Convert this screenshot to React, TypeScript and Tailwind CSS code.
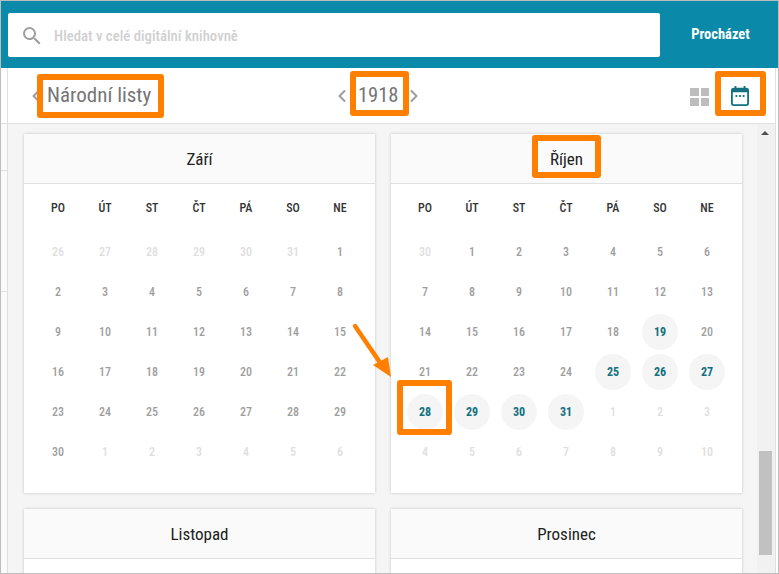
import { ChevronLeft, ChevronRight } from 'lucide-react';

const DAYS = ['PO', 'ÚT', 'ST', 'ČT', 'PÁ', 'SO', 'NE'];

type Day = { n: number; muted?: boolean; issue?: boolean };

const range = (from: number, to: number, extra: Partial<Day> = {}): Day[] =>
  Array.from({ length: to - from + 1 }, (_, i) => ({ n: from + i, ...extra }));

const SEPTEMBER: Day[] = [
  ...range(26, 31, { muted: true }),
  ...range(1, 30),
  ...range(1, 6, { muted: true }),
];

const OCTOBER: Day[] = [
  ...range(30, 30, { muted: true }),
  ...range(1, 18),
  ...range(19, 19, { issue: true }),
  ...range(20, 24),
  ...range(25, 31, { issue: true }),
  ...range(1, 10, { muted: true }),
];

function MonthHeader({ name }: { name: string }) {
  return (
    <div className="h-[50px] pt-[2px] flex items-center justify-center bg-[#fafafa] border-b border-[#e0e0e0] text-[17px] text-[#212121] font-stretch-condensed">
      {name}
    </div>
  );
}

function MonthCard({ name, days }: { name: string; days: Day[] }) {
  return (
    <div className="bg-white shadow-[0_0_3px_rgba(0,0,0,0.2)] h-[359px]">
      <MonthHeader name={name} />
      <div className="pl-[10.5px] pr-[11.5px] pt-[4px]">
        <div className="grid grid-cols-7 mb-[4px]">
          {DAYS.map((d) => (
            <div key={d} className="h-[40px] flex items-center justify-center text-[12px] font-medium text-[#333] font-stretch-condensed">
              {d}
            </div>
          ))}
        </div>
        <div className="grid grid-cols-7">
          {days.map((d, i) => (
            <div key={i} className="h-[40px] flex items-center justify-center">
              <span
                className={`w-9 h-9 rounded-full flex items-center justify-center text-[12px] font-stretch-condensed ${
                  d.issue ? 'bg-[#f5f5f5] text-[#12707f] font-bold' : d.muted ? 'font-medium text-[#dedede]' : 'font-medium text-[#9e9e9e]'
                }`}
              >
                {d.n}
              </span>
            </div>
          ))}
        </div>
      </div>
    </div>
  );
}

export default function App() {
  return (
    <div className="relative w-[779px] h-[574px] overflow-hidden bg-white border border-[#bdbdbd] font-['Roboto',sans-serif]">
      {/* Search bar */}
      <div className="h-[67px] bg-[#0a89a8] flex items-center pl-[7px] pt-[1px]">
        <div className="w-[652px] h-[44px] bg-white rounded-[2px] flex items-center pl-[12px]">
          <svg width="24" height="24" viewBox="0 0 24 24" className="mt-[2px] text-[#9e9e9e]">
            <path fill="currentColor" d="M15.5 14h-.79l-.28-.27A6.471 6.471 0 0 0 16 9.5 6.5 6.5 0 1 0 9.5 16c1.61 0 3.09-.59 4.23-1.57l.27.28v.79l5 4.99L20.49 19l-4.99-5zm-6 0C7.01 14 5 11.99 5 9.5S7.01 5 9.5 5 14 7.01 14 9.5 11.99 14 9.5 14z" />
          </svg>
          <span className="ml-[10px] mt-[2px] text-[14.8px] font-medium text-[#d0d0d0] font-stretch-condensed">Hledat v celé digitální knihovně</span>
        </div>
        <div className="flex-1 pl-[3px] text-center text-[14.5px] font-bold text-white font-stretch-condensed">Procházet</div>
      </div>

      <div className="flex h-[505px]">
        {/* Left strip */}
        <div className="w-[7px] shrink-0 border-r border-[#e0e0e0] flex flex-col">
          <div className="h-[56px] border-b border-[#e0e0e0]" />
          <div className="h-[47px] border-b border-[#e0e0e0] bg-[#fafafa]" />
          <div className="h-[121px] border-b border-[#e0e0e0] bg-[#fafafa]" />
          <div className="flex-1 bg-[#fafafa]" />
        </div>

        <div className="flex-1 min-w-0 flex flex-col">
          {/* Toolbar */}
          <div className="h-[56px] shrink-0 border-b border-[#e0e0e0] flex items-center pl-[18px] pr-[26px] text-[#757575]">
            <ChevronLeft size={20} strokeWidth={2.5} className="text-[#9e9e9e] shrink-0" />
            <span className="ml-[1px] w-[285px] shrink-0 text-[21px] font-stretch-condensed">Národní listy</span>
            <ChevronLeft size={20} strokeWidth={2.5} className="text-[#9e9e9e] shrink-0" />
            <span className="mx-[6px] text-[20.5px] font-stretch-condensed">1918</span>
            <ChevronRight size={20} strokeWidth={2.5} className="text-[#9e9e9e] shrink-0" />
            <div className="ml-auto mt-[2px] grid grid-cols-2 gap-[2px] w-[19px] h-[18px] mr-[22px]">
              <span className="bg-[#bdbdbd]" />
              <span className="bg-[#bdbdbd]" />
              <span className="bg-[#bdbdbd]" />
              <span className="bg-[#bdbdbd]" />
            </div>
            <svg width="18" height="20" viewBox="0 0 20 22" preserveAspectRatio="none" className="text-[#12707f]">
              <path fill="currentColor" d="M4 0h2v2h8V0h2v2h1a3 3 0 0 1 3 3v14a3 3 0 0 1-3 3H3a3 3 0 0 1-3-3V5a3 3 0 0 1 3-3h1zM2 7v12a1 1 0 0 0 1 1h14a1 1 0 0 0 1-1V7z" />
              <path fill="currentColor" d="M5 10h2v2H5zM9 10h2v2H9zM13 10h2v2h-2z" />
            </svg>
          </div>

          {/* Scrolling calendar */}
          <div className="flex-1 min-h-0 flex bg-[#f5f5f5]">
            <div className="flex-1 min-w-0 overflow-hidden pl-[16px] pr-[15px] pt-[10px]">
              <div className="grid grid-cols-2 gap-[16px]">
                <MonthCard name="Září" days={SEPTEMBER} />
                <MonthCard name="Říjen" days={OCTOBER} />
                <div className="bg-white h-[120px] shadow-[0_0_3px_rgba(0,0,0,0.2)]">
                  <MonthHeader name="Listopad" />
                </div>
                <div className="bg-white h-[120px] shadow-[0_0_3px_rgba(0,0,0,0.2)]">
                  <MonthHeader name="Prosinec" />
                </div>
              </div>
            </div>
            <div className="w-[18px] shrink-0 bg-[#f1f1f1] relative">
              <div className="absolute left-[2px] top-[327px] w-[13px] h-[104px] bg-[#c1c1c1]" />
              <div className="absolute left-[4px] top-[7px] w-0 h-0 border-x-[4px] border-x-transparent border-b-[4px] border-b-[#505050]" />
            </div>
          </div>
        </div>

        {/* Right strip */}
        <div className="w-[3px] shrink-0 border-l border-[#e0e0e0]" />
      </div>

      {/* Orange annotations */}
      <div className="absolute left-[36px] top-[73px] w-[127px] h-[44px] border-[6px] border-[#ff8000] rounded-[3px]" />
      <div className="absolute left-[349px] top-[70px] w-[59px] h-[45px] border-[6px] border-[#ff8000] rounded-[3px]" />
      <div className="absolute left-[714px] top-[70px] w-[51px] h-[45px] border-[6px] border-[#ff8000] rounded-[3px]" />
      <div className="absolute left-[531px] top-[134px] w-[69px] h-[43px] border-[6px] border-[#ff8000] rounded-[3px]" />
      <div className="absolute left-[396px] top-[379px] w-[55px] h-[55px] border-[6px] border-[#ff8000] rounded-[3px]" />
      <svg className="absolute left-[349px] top-[319px]" width="45" height="60" viewBox="0 0 45 60">
        <path d="M5 6L31 44" stroke="#ff8000" strokeWidth="4.5" strokeLinecap="round" />
        <path d="M23 45L38 37L41 57z" fill="#ff8000" />
      </svg>
    </div>
  );
}
